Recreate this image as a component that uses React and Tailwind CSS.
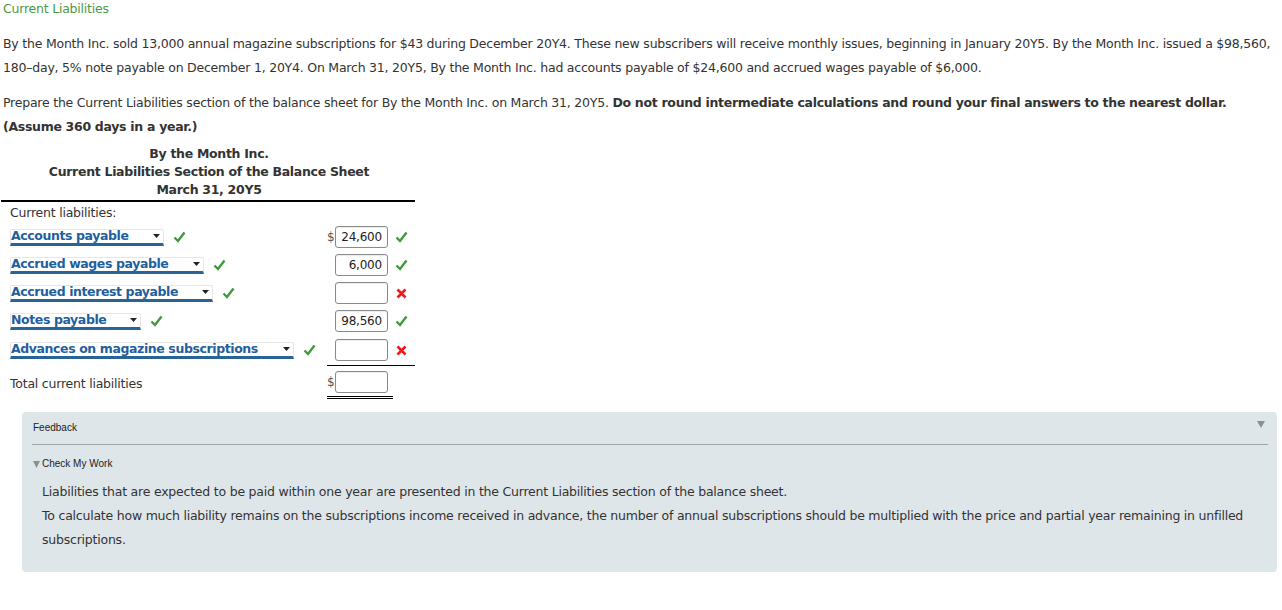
import React from "react";

const font = { fontFamily: '"DejaVu Sans", Verdana, sans-serif' };
const arial = { fontFamily: '"Liberation Sans", Arial, sans-serif' };

function Check() {
  return (
    <svg width="13" height="12" viewBox="0 0 13 12" className="shrink-0">
      <path d="M1.5 6.5 L5 10 L11.5 1.5" fill="none" stroke="#3f9a3a" strokeWidth="2.4" />
    </svg>
  );
}

function Cross() {
  return (
    <svg width="11" height="11" viewBox="0 0 11 11" className="shrink-0">
      <path d="M1.5 1.5 L9.5 9.5 M9.5 1.5 L1.5 9.5" stroke="#ee1c1c" strokeWidth="2.6" />
    </svg>
  );
}

function Select({ label, width }) {
  return (
    <div className="flex items-center" style={{ width }}>
      <div className="flex w-full items-center justify-between h-[17px] bg-white border border-[#e6e6e6] border-b-[3px] border-b-[#2a6496] rounded-t-[2px]">
        <span className="font-bold text-[12.5px] tracking-[-0.4px] leading-[14px] text-[#1f5f9e] whitespace-nowrap">{label}</span>
        <svg width="7" height="4" viewBox="0 0 7 4" className="mr-[3px]">
          <path d="M0 0 L7 0 L3.5 4 Z" fill="#222" />
        </svg>
      </div>
    </div>
  );
}

function Input({ value }) {
  return (
    <div className="w-[53px] h-[22px] border border-[#8a8a8a] rounded-[3px] bg-white shadow-[inset_0_1px_1px_rgba(0,0,0,0.08)] flex items-center justify-end pr-[5px] text-[12px] tracking-[-0.2px] text-[#222]">
      {value}
    </div>
  );
}

function Row({ label, width, value, ok, dollar, h = "h-[28px]" }) {
  return (
    <div className={`flex items-center ${h}`}>
      <div className="flex-1 flex items-center pl-[9px]">
        <Select label={label} width={width} />
        <div className="ml-[9px]"><Check /></div>
      </div>
      <div className="w-[8px] text-[12px] text-[#555]">{dollar ? "$" : ""}</div>
      <Input value={value} />
      <div className="w-[27px] flex justify-center">{ok ? <Check /> : <Cross />}</div>
    </div>
  );
}

export default function App() {
  return (
    <div className="bg-white w-[1282px] h-[610px] text-[#333] relative pt-[1px] overflow-hidden text-[12.5px] tracking-[-0.22px]" style={font}>
      <div className="pl-[3px]">
        <div className="leading-[16px] text-[#4c9a45]">Current Liabilities</div>
        <p className="mt-[15px] leading-[24px] whitespace-nowrap">
          By the Month Inc. sold 13,000 annual magazine subscriptions for $43 during December 20Y4. These new subscribers will receive monthly issues, beginning in January 20Y5. By the Month Inc. issued a $98,560,
          <br />
          180–day, 5% note payable on December 1, 20Y4. On March 31, 20Y5, By the Month Inc. had accounts payable of $24,600 and accrued wages payable of $6,000.
        </p>
        <p className="mt-[11px] leading-[24px] whitespace-nowrap">
          Prepare the Current Liabilities section of the balance sheet for By the Month Inc. on March 31, 20Y5.{" "}
          <b className="tracking-[-0.3px]">Do not round intermediate calculations and round your final answers to the nearest dollar.</b>
          <br />
          <b className="tracking-[-0.3px]">(Assume 360 days in a year.)</b>
        </p>
      </div>

      <div className="ml-[1px] mt-[6px] w-[414px]">
        <div className="text-center font-bold leading-[18px] pl-[2px] tracking-[-0.3px]">
          <div>By the Month Inc.</div>
          <div>Current Liabilities Section of the Balance Sheet</div>
          <div>March 31, 20Y5</div>
        </div>
        <div className="h-[2px] bg-black mt-[1px]" />
        <div className="h-[21px] flex items-center pl-[9px] pt-[1px]">Current liabilities:</div>
        <Row label="Accounts payable" width={154} value="24,600" ok dollar />
        <Row label="Accrued wages payable" width={194} value="6,000" ok />
        <Row label="Accrued interest payable" width={203} value="" />
        <Row label="Notes payable" width={131} value="98,560" ok />
        <Row label="Advances on magazine subscriptions" width={284} value="" h="h-[30px]" />
        <div className="ml-[326px] h-px bg-black" />
        <div className="flex items-center h-[35px] pt-[2px]">
          <div className="flex-1 pl-[9px]">Total current liabilities</div>
          <div className="w-[66px] flex flex-col">
            <div className="flex items-center">
              <div className="w-[8px] text-[12px] text-[#555]">$</div>
              <Input value="" />
            </div>
            <div className="mt-[3px] h-px bg-black" />
            <div className="mt-[1px] h-px bg-black" />
          </div>
          <div className="w-[22px]" />
        </div>
      </div>

      <div className="ml-[22px] mt-[11px] w-[1255px] h-[160px] bg-[#dfe6e9] rounded-[4px] pl-[10px] pr-[9px] pt-[10px] relative tracking-normal">
        <div className="text-[10px] leading-[12px] text-[#222] pl-[1px]" style={arial}>Feedback</div>
        <svg className="absolute right-[12px] top-[9px]" width="8" height="7" viewBox="0 0 8 7">
          <path d="M0 0 L8 0 L4 7 Z" fill="#8a8f92" />
        </svg>
        <div className="mt-[10px] h-px bg-[#9ea3a6]" />
        <div className="mt-[13px] flex items-center text-[10px] leading-[12px] text-[#222]" style={arial}>
          <svg width="7" height="7" viewBox="0 0 7 7" className="ml-[1px] mr-[2px]">
            <path d="M0 0 L7 0 L3.5 7 Z" fill="#8a8f92" />
          </svg>
          Check My Work
        </div>
        <div className="mt-[10px] pl-[10px] leading-[24px] text-[#333] whitespace-nowrap tracking-[-0.22px]">
          <div>Liabilities that are expected to be paid within one year are presented in the Current Liabilities section of the balance sheet.</div>
          <div>
            To calculate how much liability remains on the subscriptions income received in advance, the number of annual subscriptions should be multiplied with the price and partial year remaining in unfilled
            <br />
            subscriptions.
          </div>
        </div>
      </div>
    </div>
  );
}
